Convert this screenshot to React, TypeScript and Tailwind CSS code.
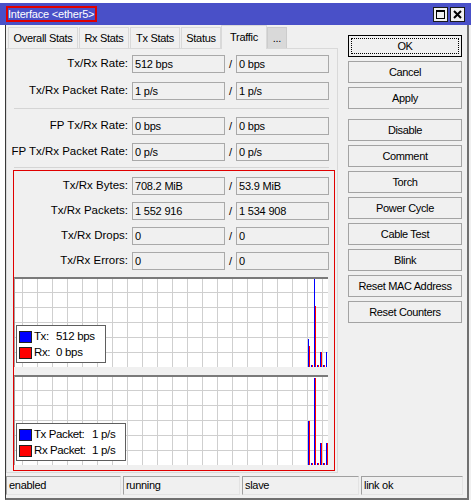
import React from 'react';

type Row = { label: string; tx: string; rx: string };

const rateRows: Row[] = [
  { label: 'Tx/Rx Rate:', tx: '512 bps', rx: '0 bps' },
  { label: 'Tx/Rx Packet Rate:', tx: '1 p/s', rx: '1 p/s' },
];

const fpRows: Row[] = [
  { label: 'FP Tx/Rx Rate:', tx: '0 bps', rx: '0 bps' },
  { label: 'FP Tx/Rx Packet Rate:', tx: '0 p/s', rx: '0 p/s' },
];

const totalRows: Row[] = [
  { label: 'Tx/Rx Bytes:', tx: '708.2 MiB', rx: '53.9 MiB' },
  { label: 'Tx/Rx Packets:', tx: '1 552 916', rx: '1 534 908' },
  { label: 'Tx/Rx Drops:', tx: '0', rx: '0' },
  { label: 'Tx/Rx Errors:', tx: '0', rx: '0' },
];

const buttons = [
  'Cancel',
  'Apply',
  'Disable',
  'Comment',
  'Torch',
  'Power Cycle',
  'Cable Test',
  'Blink',
  'Reset MAC Address',
  'Reset Counters',
];

// bars: [x, top] in graph coordinates (bottom = 88)
type Bar = { x: number; top: number; color: string };

const trafficBars: Bar[] = [
  { x: 293, top: 60, color: '#0000ff' },
  { x: 294, top: 67, color: '#ff0000' },
  { x: 296, top: 86, color: '#0000ff' },
  { x: 297, top: 86, color: '#ff0000' },
  { x: 299, top: 0, color: '#0000ff' },
  { x: 300, top: 27, color: '#ff0000' },
  { x: 302, top: 86, color: '#0000ff' },
  { x: 303, top: 86, color: '#ff0000' },
  { x: 305, top: 73, color: '#0000ff' },
  { x: 306, top: 73, color: '#ff0000' },
  { x: 308, top: 86, color: '#0000ff' },
  { x: 309, top: 86, color: '#ff0000' },
  { x: 311, top: 73, color: '#0000ff' },
];

const packetBars: Bar[] = [
  { x: 293, top: 44, color: '#0000ff' },
  { x: 294, top: 44, color: '#ff0000' },
  { x: 296, top: 86, color: '#0000ff' },
  { x: 297, top: 86, color: '#ff0000' },
  { x: 299, top: 1, color: '#0000ff' },
  { x: 300, top: 1, color: '#ff0000' },
  { x: 302, top: 86, color: '#0000ff' },
  { x: 303, top: 86, color: '#ff0000' },
  { x: 305, top: 66, color: '#0000ff' },
  { x: 306, top: 66, color: '#ff0000' },
  { x: 308, top: 86, color: '#0000ff' },
  { x: 309, top: 86, color: '#ff0000' },
  { x: 311, top: 66, color: '#0000ff' },
  { x: 312, top: 66, color: '#ff0000' },
];

const Field = ({ value }: { value: string }) => (
  <div className="w-[93px] h-[18px] shrink-0 border border-[#a9a9a9] bg-[#f0f0f0] pl-[2px] flex items-center tracking-[-0.2px]">
    {value}
  </div>
);

const StatRow = ({ row, labelClass }: { row: Row; labelClass: string }) => (
  <div className="flex items-center h-[18px]">
    <div className={`${labelClass} shrink-0 text-right text-[11.5px]`}>{row.label}</div>
    <div className="ml-[4px]">
      <Field value={row.tx} />
    </div>
    <div className="w-[11px] text-center">/</div>
    <Field value={row.rx} />
  </div>
);

const Graph = ({
  bars,
  legend,
  legendWidth,
  keyWidth,
}: {
  bars: Bar[];
  legend: [string, string][];
  legendWidth: string;
  keyWidth: string;
}) => {
  const vLines = Array.from({ length: 21 }, (_, i) => 7.5 + i * 15);
  const hLines = Array.from({ length: 5 }, (_, i) => 13.5 + i * 15);
  const colors = ['#0000ff', '#ff0000'];
  return (
    <div className="relative w-[314px] h-[90px] border-t-2 border-t-[#7a7a7a] border-l border-l-[#a0a0a0] bg-white">
      <svg width="313" height="88" className="block">
        {vLines.map((x) => (
          <line key={`v${x}`} x1={x} y1={0} x2={x} y2={88} stroke="#cfcfcf" strokeWidth={1} />
        ))}
        {hLines.map((y) => (
          <line key={`h${y}`} x1={0} y1={y} x2={313} y2={y} stroke="#cfcfcf" strokeWidth={1} />
        ))}
        {bars.map((b) => (
          <rect key={b.x} x={b.x} y={b.top} width={1} height={88 - b.top} fill={b.color} />
        ))}
      </svg>
      <div
        className={`absolute left-[1px] bottom-[4px] ${legendWidth} h-[38px] border border-[#5f5f5f] bg-white pt-[3px]`}
      >
        {legend.map(([k, v], i) => (
          <div key={k} className="flex items-center h-[16px] text-[11.5px]">
            <div
              className="ml-[2px] w-[13px] h-[12px] border border-[#202020]"
              style={{ backgroundColor: colors[i] }}
            />
            <span className={`ml-[2px] ${keyWidth} tracking-[-0.4px]`}>{k}</span>
            <span className="tracking-[-0.3px]">{v}</span>
          </div>
        ))}
      </div>
    </div>
  );
};

const tabs = [
  { name: 'Overall Stats', w: 'w-[70px]', ml: '' },
  { name: 'Rx Stats', w: 'w-[50px]', ml: 'ml-[1px]' },
  { name: 'Tx Stats', w: 'w-[50px]', ml: 'ml-[1px]' },
  { name: 'Status', w: 'w-[40px]', ml: 'ml-[1px]' },
];

export default function App() {
  return (
    <div className="w-[471px] h-[500px] bg-[#f0f0f0] overflow-hidden text-[11px] leading-none text-black font-['Liberation_Sans',Arial,sans-serif]">
      <div className="h-[3px] bg-white" />

      {/* title bar */}
      <div className="h-[22px] bg-[#4950c8] flex items-center">
        <div className="ml-[6px] h-[16px] border-2 border-[#e00000] text-white flex items-center tracking-[-0.2px] pr-[1px]">
          Interface &lt;ether5&gt;
        </div>
        <div className="ml-auto mr-[6px] flex gap-[2px]">
          <div className="w-[15px] h-[15px] border border-[#1a1a1a] bg-[#f0f0f0] flex items-center justify-center">
            <svg width="11" height="11" viewBox="0 0 11 11">
              <rect x="1.5" y="1.5" width="8" height="8" fill="none" stroke="#000" strokeWidth="1" />
              <rect x="1" y="1" width="9" height="2" fill="#000" />
            </svg>
          </div>
          <div className="w-[15px] h-[15px] border border-[#1a1a1a] bg-[#f0f0f0] flex items-center justify-center">
            <svg width="11" height="11" viewBox="0 0 11 11">
              <path d="M2 2 L9 9 M9 2 L2 9" stroke="#000" strokeWidth="2" />
            </svg>
          </div>
        </div>
      </div>

      {/* body */}
      <div className="flex h-[475px]">
        <div className="w-[5px] bg-white" />
        <div className="w-[464px] flex flex-col border-l border-l-[#3a3a3a] border-r-2 border-r-[#707070] border-b-2 border-b-[#707070]">
          <div className="flex h-[448px]">
            <div className="w-[332px] flex flex-col">
              {/* tabs */}
              <div className="h-[23px] flex items-end pl-[2px] tracking-[-0.3px]">
                {tabs.map((t) => (
                  <div
                    key={t.name}
                    className={`${t.w} ${t.ml} h-[21px] border border-b-0 border-[#d9d9d9] bg-[#f0f0f0] flex items-center justify-center`}
                  >
                    {t.name}
                  </div>
                ))}
                <div className="relative z-10 w-[46px] h-[24px] -mb-px border border-b-0 border-[#d9d9d9] bg-[#f0f0f0] flex items-center justify-center">
                  Traffic
                </div>
                <div className="w-[20px] h-[21px] border border-b-0 border-[#cccccc] bg-[#d9d9d9] flex items-center justify-center">
                  ...
                </div>
              </div>

              {/* panel */}
              <div className="h-[425px] border border-[#d9d9d9] bg-[#f0f0f0] flex flex-col pt-[6px]">
                <StatRow row={rateRows[0]} labelClass="w-[121px]" />
                <div className="mt-[9px]">
                  <StatRow row={rateRows[1]} labelClass="w-[121px]" />
                </div>
                <div className="mt-[8px] ml-[7px] w-[315px] border-t border-[#d5d5d5]" />
                <div className="mt-[8px]">
                  <StatRow row={fpRows[0]} labelClass="w-[121px]" />
                </div>
                <div className="mt-[8px]">
                  <StatRow row={fpRows[1]} labelClass="w-[121px]" />
                </div>
                <div className="mt-[6px] ml-[7px] w-[315px] border-t border-[#d5d5d5]" />

                <div className="mt-[2px] ml-[6px] w-[322px] border border-[#e00000] pt-[6px] pb-[5px] flex flex-col">
                  {totalRows.map((r, i) => (
                    <div key={r.label} className={i > 0 ? 'mt-[7px]' : ''}>
                      <StatRow row={r} labelClass="w-[114px]" />
                    </div>
                  ))}
                  <div className="mt-[7px]">
                    <Graph
                      bars={trafficBars}
                      legend={[
                        ['Tx:', '512 bps'],
                        ['Rx:', '0 bps'],
                      ]}
                      legendWidth="w-[90px]"
                      keyWidth="w-[22px]"
                    />
                  </div>
                  <div className="mt-[8px]">
                    <Graph
                      bars={packetBars}
                      legend={[
                        ['Tx Packet:', '1 p/s'],
                        ['Rx Packet:', '1 p/s'],
                      ]}
                      legendWidth="w-[110px]"
                      keyWidth="w-[58px]"
                    />
                  </div>
                </div>
              </div>
            </div>

            {/* buttons */}
            <div className="ml-[10px] pt-[10px] w-[114px] flex flex-col tracking-[-0.35px]">
              <div className="h-[22px] border border-black bg-[#f0f0f0] p-[2px]">
                <div className="h-full border border-dotted border-black flex items-center justify-center">
                  OK
                </div>
              </div>
              {buttons.map((b) => (
                <div
                  key={b}
                  className={`${b === 'Disable' ? 'mt-[10px]' : 'mt-[4px]'} h-[22px] border border-[#a3a3a3] bg-[#f0f0f0] flex items-center justify-center`}
                >
                  {b}
                </div>
              ))}
            </div>
          </div>

          {/* status bar */}
          <div className="mt-[3px] h-[19px] flex gap-[2px] tracking-[-0.3px]">
            {[
              ['enabled', 'w-[115px]'],
              ['running', 'w-[117px]'],
              ['slave', 'w-[117px]'],
              ['link ok', 'w-[102px]'],
            ].map(([t, w]) => (
              <div
                key={t}
                className={`${w} h-full border-t border-l border-t-[#a0a0a0] border-l-[#a0a0a0] border-b border-r border-b-[#e3e3e3] border-r-[#e3e3e3] pl-[2px] flex items-center`}
              >
                {t}
              </div>
            ))}
          </div>
        </div>
        <div className="w-[2px]" />
      </div>
    </div>
  );
}
